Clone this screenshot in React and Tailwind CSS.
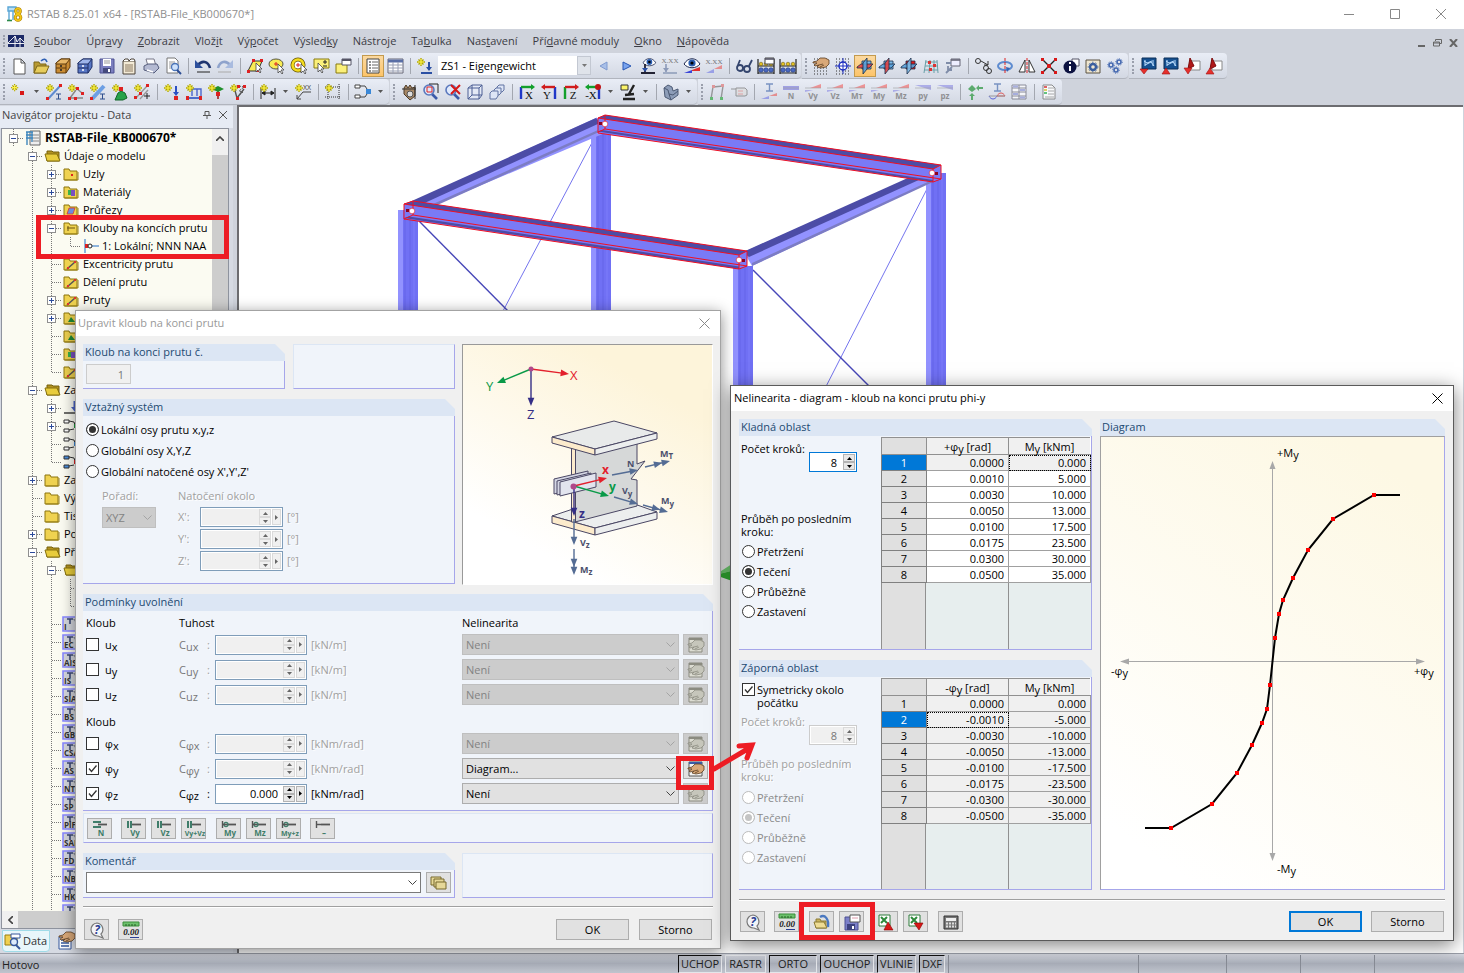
import React from "react";

const MENU = [
  ["", "S", "oubor"],
  ["Úpr", "a", "vy"],
  ["", "Z", "obrazit"],
  ["Vlož", "i", "t"],
  ["Vý", "p", "očet"],
  ["Výsled", "k", "y"],
  ["Nástro", "j", "e"],
  ["Ta", "b", "ulka"],
  ["Nas", "t", "avení"],
  ["Pří", "d", "avné moduly"],
  ["", "O", "kno"],
  ["", "N", "ápověda"],
];

const Star = () => (
  <>
    <path d="M4 0v8M0 4h8M1.5 1.5l5 5M6.5 1.5l-5 5" stroke="#b0a600" strokeWidth="1.4" />
    <path d="M4 1v6M1 4h6" stroke="#fff34a" strokeWidth="1.2" />
  </>
);
const Planes = ({ a, b, c }) => (
  <g stroke="#1c2f4a" strokeWidth=".8">
    <path d="M5 3h9v8H5z" fill={c} />
    <path d="M0 9l4-3h12l-4 4H0z" fill={a} fillOpacity=".9" />
    <path d="M6 5l4-5v11l-4 5z" fill={b} fillOpacity=".9" />
  </g>
);
const Wedge = ({ label, down, flat }) => (
  <g opacity=".75">
    {flat ? (
      <path d="M0 2h16v4H0z" fill="#8a8ae0" />
    ) : down ? (
      <path d="M0 1h16v5z" fill="#9a9ae6" />
    ) : (
      <>
        <path d="M0 6h8L0 8z" fill="#9a9ae6" />
        <path d="M5 4L16 0v4z" fill="#ef7777" />
      </>
    )}
    <path d="M0 4h16" stroke="#888" strokeWidth=".6" />
    <text x="8" y="15" textAnchor="middle" fontSize="8" fontWeight="bold" fill="#777">{label}</text>
  </g>
);
const Axis = ({ label, h, v, flip }) => (
  <g>
    <path d={flip ? "M14 3v12" : "M2 3v12"} stroke={v} strokeWidth="2.4" />
    <path d="M2 3h12" stroke={h} strokeWidth="2.4" />
    <path d={flip ? "M4 0L0 3l4 3z" : "M12 0l4 3-4 3z"} fill={h} />
    <text x={flip ? 6 : 10} y="15" textAnchor="middle" fontSize="11" fontFamily="Liberation Serif" fill="#111">{label}</text>
  </g>
);
const Lens = () => (
  <>
    <path d="M9 10l5 5" stroke="#3c5aa8" strokeWidth="2.6" />
    <circle cx="6" cy="6" r="5" fill="#dfe9fb" stroke="#5a78bd" strokeWidth="1.6" />
  </>
);
const Bridge = ({ sq }) => (
  <>
    <path d="M0 1v15M16 1v15M0 8h16M0 15h16" stroke="#222" strokeWidth="1.2" />
    <g fill="#e2c020" stroke="#5c4a00" strokeWidth=".5">
      <circle cx="3" cy="6" r="1.8" />
      <circle cx="8" cy="6" r="1.8" />
      <circle cx="13" cy="6" r="1.8" />
    </g>
    <g fill="#4a68c0" stroke="#182c66" strokeWidth=".5">
      <circle cx="3" cy="12" r="2.3" />
      <circle cx="8" cy="12" r="2.3" />
      <circle cx="13" cy="12" r="2.3" />
    </g>
    {sq && (
      <>
        <path d="M7 0h9v6H7z" fill="#fff" stroke="#444" />
        <path d="M7 1h9" stroke="#556" strokeWidth="1.6" />
      </>
    )}
  </>
);
const Eye = () => (
  <>
    <path d="M0 6C4-1 12-1 16 6c-4 5-12 5-16 0z" fill="#fff" stroke="#1d2850" />
    <circle cx="8" cy="5" r="3.6" fill="#2a5db0" />
    <circle cx="8" cy="5" r="1.6" fill="#000" />
  </>
);
const HAND = "M0 6l4-1 3-3h5l4 2v4l-3 3-5 1-4-1 2-2-4 1-1-1 3-2H0z";
const Hand = () => (
  <>
    <path d={HAND} fill="#d9a878" stroke="#5b3d22" strokeWidth=".8" />
    <path d="M6 9l4-1M7 11l4-2" stroke="#5b3d22" strokeWidth=".8" />
  </>
);
const Dots = () => (
  <path d="M1 1h15M1 4h15M1 7h15M1 10h15M1 13h15M1 16h15" stroke="#333" strokeDasharray="1 2" />
);
const Cad = ({ up }) => (
  <>
    <path d="M2 0h14v11H2z" fill="#155090" stroke="#0a2e58" />
    <path d="M4 3l3 2 5-2M5 7l6-3 3 4M5 2v6M13 2v6" stroke="#bfe0ff" fill="none" />
    <path d={up ? "M0 16l4-6 4 6z" : "M0 11h8l-4 5z"} fill="#e6302c" stroke="#a31010" strokeWidth=".6" />
  </>
);
const Pdf = ({ up }) => (
  <>
    <path d="M6 3h10v9H6z" fill="#fff" stroke="#888" />
    <path d="M6 0l4 8-6 3z" fill="#b01818" stroke="#7c0c0c" />
    <path d={up ? "M0 16l4-6 4 6z" : "M0 10h8l-4 6z"} fill="#e6302c" stroke="#a31010" strokeWidth=".6" />
  </>
);

const ICONS = {
  new: <path d="M3 1h7l4 4v11H3zM10 1v4h4" fill="#fff" stroke="#555" />,
  open: (
    <>
      <path d="M1 4h5l1 2h6v9H1z" fill="#b89a32" stroke="#7d6718" />
      <path d="M1 15l3-7h12l-3 7z" fill="#e6cc5c" stroke="#7d6718" />
      <path d="M8 3c3-3 5-2 6 1" fill="none" stroke="#2f60b4" strokeWidth="1.6" />
    </>
  ),
  crate: (
    <>
      <path d="M1 5l5-4h9v8l-4 6H1z" fill="#c98c34" stroke="#5f3a0c" />
      <path d="M1 5l5-4h9l-4 5H1z" fill="#e8b766" stroke="#5f3a0c" />
      <path d="M11 6v9M1 10h10" stroke="#5f3a0c" />
      <path d="M5 8h2M5 12h2" stroke="#222" strokeWidth="1.4" />
    </>
  ),
  crateBlue: (
    <>
      <path d="M1 5l5-4h9v8l-4 6H1z" fill="#5877c4" stroke="#1e2f66" />
      <path d="M1 5l5-4h9l-4 5H1z" fill="#9db4ea" stroke="#1e2f66" />
      <path d="M11 6v9M1 10h10" stroke="#1e2f66" />
      <path d="M5 8h2M5 12h2" stroke="#fff" strokeWidth="1.4" />
    </>
  ),
  save: (
    <>
      <path d="M1 1h14v14H1z" fill="#7b7fbf" stroke="#4d5192" />
      <path d="M4 1h8v7H4z" fill="#fff" />
      <path d="M5 3h6M5 5h6" stroke="#999" />
      <path d="M4 10h8v5H4z" fill="#444a7e" />
      <path d="M9 11h2v3H9z" fill="#fff" />
    </>
  ),
  notes: (
    <>
      <path d="M2 3h12v13H2z" fill="#f3ead6" stroke="#4b4238" />
      <path d="M2 3l2-2h3l1 2 2-2h3l1 2" fill="#fff" stroke="#4b4238" />
      <path d="M4 7h8M4 9h8M4 11h8M4 13h8" stroke="#8c7b62" />
    </>
  ),
  print: (
    <>
      <path d="M3 1h8l2 7H5z" fill="#fff" stroke="#778" />
      <path d="M1 8l4-2h9l2 4-5 5-10-3z" fill="#b4bad2" stroke="#555d7c" />
      <path d="M4 12l6 2" stroke="#fff" strokeWidth="1.5" />
    </>
  ),
  preview: (
    <>
      <path d="M2 0h8l3 3v12H2z" fill="#fff" stroke="#777" />
      <path d="M4 4h6M4 6h6M4 8h3M4 10h2" stroke="#999" />
      <circle cx="10" cy="9" r="3.5" fill="#cfe2fb" stroke="#4a74b8" strokeWidth="1.3" />
      <path d="M12 12l4 4" stroke="#2c4d94" strokeWidth="2" />
    </>
  ),
  undo: (
    <>
      <path d="M3 7c4-5 10-4 12 3" fill="none" stroke="#1f3570" strokeWidth="2.6" />
      <path d="M0 2v8h8z" fill="#2c4f9c" />
      <path d="M2 14h13" stroke="#222" />
    </>
  ),
  redo: (
    <>
      <path d="M13 7C9 2 3 3 1 10" fill="none" stroke="#8fa3cc" strokeWidth="2.6" />
      <path d="M16 2v8H8z" fill="#a9bbdf" />
      <path d="M1 14h13" stroke="#aaa" />
    </>
  ),
  selPoly: (
    <>
      <path d="M1 13L6 3h9l-4 10z" fill="#f8ec54" stroke="#333" />
      <path d="M0 12h3v3H0zM5 1h3v3H5zM13 1h3v3h-3zM10 11h3v3h-3z" fill="#d22" />
      <path d="M9 5v9l2-2 2 3 1-1-2-3h3z" stroke="#444" strokeWidth=".8" fill="#fff" />
    </>
  ),
  selEllipse: (
    <>
      <ellipse cx="7" cy="6" rx="7" ry="5" fill="#f8ec54" stroke="#554" />
      <path d="M7 4v4M5 6h4" stroke="#d22" />
      <path d="M9 6v9l2-2 2 3 1-1-2-3h3z" stroke="#444" strokeWidth=".8" fill="#fff" />
    </>
  ),
  selRing: (
    <>
      <circle cx="7" cy="7" r="5.5" fill="#fff" stroke="#665500" strokeWidth="4" />
      <circle cx="7" cy="7" r="5.5" fill="none" stroke="#f4dc1e" strokeWidth="2.6" />
      <path d="M7 5v4M5 7h4" stroke="#d22" />
      <path d="M10 6v9l2-2 2 3 1-1-2-3h3z" stroke="#444" strokeWidth=".8" fill="#fff" />
    </>
  ),
  selRect: (
    <>
      <path d="M1 1h15v9H1z" fill="#fbf07a" stroke="#887a10" />
      <path d="M5 5v9l2-2 2 3 1-1-2-3h3z" stroke="#444" strokeWidth=".8" fill="#fff" />
      <path d="M12 2v4M10 4h4M10 8h4" stroke="#222" />
    </>
  ),
  selWin: (
    <>
      <path d="M1 6h11v9H1z" fill="#fbf07a" stroke="#887a10" />
      <path d="M7 1h9v6H7z" fill="#fff" stroke="#556" />
      <path d="M7 2h9" stroke="#556" strokeWidth="2" />
    </>
  ),
  list: (
    <>
      <path d="M2 1h12v14H2z" fill="#fff" stroke="#444" />
      <path d="M4 4h2M4 7h2M4 10h2M4 13h2" stroke="#222" />
      <path d="M7 4h6M7 7h6M7 10h6M7 13h6" stroke="#666" />
    </>
  ),
  table: (
    <>
      <path d="M1 1h15v14H1z" fill="#fff" stroke="#667" />
      <path d="M1 3h15" stroke="#5a6fa6" strokeWidth="3" />
      <path d="M1 7h15M1 10h15M1 13h15M6 4v11M11 4v11" stroke="#9aa0b4" />
    </>
  ),
  loadStar: (
    <>
      <Star />
      <path d="M12 4v8M4 15h11" stroke="#2b50a4" strokeWidth="2" />
      <path d="M9 9l3 4 3-4z" fill="#2b50a4" />
    </>
  ),
  prev: <path d="M11 4v8L4 8z" fill="#a8bfe8" stroke="#7f9ad0" />,
  next: <path d="M5 4v8l8-4z" fill="#7aa4ee" stroke="#2756b4" />,
  eyeLoad: (
    <>
      <g transform="translate(3 0) scale(.8)"><Eye /></g>
      <path d="M5 6v8M1 15h14" stroke="#223" strokeWidth="1.8" />
      <path d="M2 10l3 4 3-4z" fill="#2b50a4" />
    </>
  ),
  xxLoad: (
    <g fill="#777">
      <text x="8" y="5" textAnchor="middle" fontSize="7" fontFamily="Liberation Serif">X.XX</text>
      <path d="M4 6v8M1 15h14" stroke="#8c9ab8" strokeWidth="1.6" />
      <path d="M1 10l3 4 3-4z" fill="#8c9ab8" />
    </g>
  ),
  eyeRes: (
    <>
      <Eye />
      <path d="M0 15l8-3v3z" fill="#3a46d8" />
      <path d="M8 12l8-3v4H8z" fill="#e03030" />
    </>
  ),
  xxRes: (
    <g opacity=".8">
      <text x="8" y="6" textAnchor="middle" fontSize="7" fontFamily="Liberation Serif" fill="#555">X.XX</text>
      <path d="M0 15l8-4v4z" fill="#8a90e6" />
      <path d="M8 11l8-4v4H8z" fill="#e67a7a" />
    </g>
  ),
  glasses: (
    <g fill="none" stroke="#34456e" strokeWidth="1.8">
      <circle cx="4" cy="10" r="3" />
      <circle cx="11" cy="11" r="3" />
      <path d="M2 7L4 2M13 8l3-6M7 10h1" />
    </g>
  ),
  abacusWin: <Bridge sq />,
  abacus: <Bridge />,
  gridHand: (
    <>
      <Dots />
      <g transform="translate(0 -2)"><Hand /></g>
    </>
  ),
  gridSnap: (
    <>
      <Dots />
      <circle cx="8" cy="8" r="4" fill="#fff" stroke="#1a2cc0" strokeWidth="1.4" />
      <path d="M8 0v16M0 8h16" stroke="#1a2cc0" />
    </>
  ),
  planeA: <Planes a="#e34343" b="#5aa2dc" c="#7dbbe8" />,
  planeB: <Planes a="#5aa2dc" b="#e34343" c="#7dbbe8" />,
  planeC: <Planes a="#5aa2dc" b="#7dbbe8" c="#e01818" />,
  gridRed: (
    <>
      <path d="M3 2L1 15M7 2L6 15M11 2v13M14 2l1 13M2 4h12M2 8h13M1 12h14" stroke="#6aa0a8" />
      <path d="M5 3h3v3H5zM10 6h3v3h-3zM6 10h3v3H6z" fill="#d33" />
    </>
  ),
  tool: (
    <>
      <path d="M6 1h9v7H6z" fill="#eef" stroke="#667" />
      <path d="M6 2h9" stroke="#667" strokeWidth="1.6" />
      <path d="M1 15l6-6M3 8v4h4M1 5h5" stroke="#7f8ca8" strokeWidth="1.8" fill="none" />
    </>
  ),
  move: (
    <g fill="none" stroke="#333">
      <circle cx="3" cy="3" r="2.5" />
      <circle cx="11" cy="10" r="2.5" />
      <circle cx="14" cy="13" r="2.5" />
      <path d="M6 3l7 4M13 3v4H9" />
    </g>
  ),
  rotate: (
    <>
      <ellipse cx="8" cy="8" rx="7" ry="4" fill="none" stroke="#5d8bd0" strokeWidth="2" />
      <path d="M8 0v16" stroke="#d22" strokeDasharray="3 1" />
      <path d="M9 9l4 1-3 4z" fill="#3564b4" />
    </>
  ),
  mirror: (
    <>
      <path d="M6 2v12H0zM10 2v12h6z" fill="#fff" stroke="#333" />
      <path d="M8 0v16" stroke="#d22" strokeDasharray="3 1" />
    </>
  ),
  explode: (
    <>
      <path d="M2 2l12 12M14 2L2 14" stroke="#222" strokeWidth="1.4" />
      <path d="M0 0h3v3H0zM13 0h3v3h-3zM0 13h3v3H0zM13 13h3v3h-3zM6 6h4v4H6z" fill="#d81818" />
    </>
  ),
  info: (
    <>
      <path d="M9 1h7v7H9z" fill="#fff" stroke="#556" />
      <circle cx="7" cy="9" r="6.5" fill="#0c1240" />
      <path d="M7 8v5M7 4v2" stroke="#fff" strokeWidth="2" />
    </>
  ),
  settings: (
    <>
      <path d="M1 2h14v13H1z" fill="#efe6d0" stroke="#5b5243" />
      <circle cx="8" cy="9" r="3" fill="none" stroke="#3c5f9e" strokeWidth="2.4" />
      <circle cx="8" cy="9" r="4.8" fill="none" stroke="#3c5f9e" strokeDasharray="1.5 2" />
    </>
  ),
  gears: (
    <g fill="none" stroke="#4468b0" strokeWidth="1.6">
      <circle cx="4" cy="7" r="2" />
      <circle cx="12" cy="4" r="2" />
      <circle cx="9" cy="12" r="2" />
      <circle cx="4" cy="7" r="3.3" strokeWidth="1" strokeDasharray="1 1.5" />
      <circle cx="12" cy="4" r="3.3" strokeWidth="1" strokeDasharray="1 1.5" />
      <circle cx="9" cy="12" r="3.3" strokeWidth="1" strokeDasharray="1 1.5" />
    </g>
  ),
  cadDown: <Cad />,
  cadUp: <Cad up />,
  pdfDown: <Pdf />,
  pdfUp: <Pdf up />,
  node: (
    <>
      <g transform="scale(.9)"><Star /></g>
      <path d="M9 7h4v4H9z" fill="#d81818" />
    </>
  ),
  member: (
    <>
      <path d="M2 15L14 2" stroke="#5d8bd0" strokeWidth="2" />
      <Star />
      <path d="M0 13h3v3H0zM13 0h3v3h-3z" fill="#d22" />
      <path d="M10 10h5M10 15h5M12.500 10v5" stroke="#2f4f8e" />
    </>
  ),
  frame: (
    <>
      <path d="M1 14h14M8 4l6 5M2 14l6-8" stroke="#888" fill="none" strokeWidth="1.4" />
      <Star />
      <path d="M0 13h3v3H0zM6 13h3v3H6zM8 3h3v3H8zM13 8h3v3h-3z" fill="#d22" />
    </>
  ),
  memberI: (
    <>
      <path d="M2 15L14 2" stroke="#6d9fe4" strokeWidth="4" />
      <Star />
      <path d="M0 13h3v3H0z" fill="#d22" />
      <path d="M10 10h5M10 15h5M12.500 10v5" stroke="#2f4f8e" />
    </>
  ),
  support: (
    <>
      <path d="M6 9l3-2 4 2 2 5-4 2H3z" fill="#27a24a" stroke="#136428" />
      <Star />
      <path d="M7 3h4v4H7z" fill="#d22" />
    </>
  ),
  memberPlus: (
    <>
      <path d="M2 14L13 2M6 15l8-9" stroke="#999" strokeWidth="1.4" />
      <Star />
      <path d="M0 12h3v3H0zM12 0h3v3h-3zM5 8h3v3H5z" fill="#d22" />
      <path d="M13 9v6M10 12h6" stroke="#222" />
    </>
  ),
  load1: (
    <>
      <Star />
      <path d="M12 2v8" stroke="#2b50c4" strokeWidth="2" />
      <path d="M9 8l3 4 3-4z" fill="#2b50c4" />
      <path d="M10 12h4v4h-4z" fill="#d22" />
    </>
  ),
  load2: (
    <>
      <path d="M2 5h13v8M6 5v7M11 5v7" stroke="#4a66cc" strokeWidth="1.4" fill="none" />
      <Star />
      <path d="M1 14h14" stroke="#2b50c4" strokeWidth="1.6" />
      <path d="M0 12h3v4H0zM13 12h3v4h-3z" fill="#d22" />
    </>
  ),
  load3: (
    <>
      <path d="M10 4v11" stroke="#a02020" strokeWidth="1.6" />
      <path d="M4 5l6-3 6 3-6 3z" fill="#20902c" />
      <Star />
      <path d="M8 8h4v4H8z" fill="#d22" />
    </>
  ),
  load4: (
    <>
      <path d="M4 3l3 11L14 5" fill="none" stroke="#555" strokeWidth="1.4" />
      <path d="M9 2l5 1-5 4 4 1-4 3" fill="none" stroke="#555" strokeDasharray="2 1" />
      <Star />
      <path d="M7 1h3v3H7zM13 1h3v3h-3zM6 13h3v3H6z" fill="#d22" />
    </>
  ),
  dim: (
    <>
      <path d="M1 4v11M15 4v11M2 9h12M2 9l3-2v4zM14 9l-3-2v4z" stroke="#222" fill="#222" />
      <Star />
    </>
  ),
  textXx: (
    <>
      <Star />
      <text x="12" y="6" textAnchor="middle" fontSize="7" fill="#444">XX</text>
      <path d="M2 15L8 8h8M2 15v-4M2 15h4" stroke="#444" fill="none" />
    </>
  ),
  gridStar: (
    <>
      <path d="M3 0v16M14 0v16M0 3h16M0 13h16" stroke="#333" strokeDasharray="1 1" />
      <Star />
    </>
  ),
  combine: (
    <>
      <path d="M0 1h5v3H0zM0 11h5v3H0z" fill="#fff" stroke="#444" />
      <path d="M5 2h5l2 3M5 13h5l2-3" stroke="#444" fill="none" />
      <path d="M11 5h5v5h-5z" fill="#3a88d8" />
    </>
  ),
  pan: (
    <>
      <path d="M3 4l2-3 2 3 2-3 2 3 3-1v9l-5 4-6-6z" fill="#a88866" stroke="#4c3a28" />
      <circle cx="9" cy="10" r="3" fill="#ddd" stroke="#555" />
      <path d="M1 5h14M14 1v14" stroke="#333" />
    </>
  ),
  zoomWin: (
    <>
      <Lens />
      <path d="M6 0h9v9" fill="none" stroke="#222" />
      <path d="M4 3h5v5H4z" stroke="#d22" fill="none" />
    </>
  ),
  zoomX: (
    <>
      <Lens />
      <path d="M6 1l9 9M15 1l-9 9" stroke="#d81818" strokeWidth="2" />
    </>
  ),
  cube: <path d="M1 4l4-3h10v10l-3 4H1zM1 4h11v11M12 4l3-3M5 1v10L1 15M5 11h10" fill="#e8eefc" fillOpacity=".6" stroke="#4c5f94" />,
  cubes: (
    <g fill="#dde5f6" stroke="#6072a2">
      <path d="M8 3l2-2h5v5l-2 2H8z" />
      <path d="M5 6l2-2h5v5l-2 2H5z" />
      <path d="M1 9l2-2h6v5l-2 3H1z" />
    </g>
  ),
  axX: <Axis label="X" h="#12a02c" v="#2038c8" />,
  axY: <Axis label="Y" h="#d01c1c" v="#2038c8" flip />,
  axZ: <Axis label="Z" h="#d01c1c" v="#12a02c" />,
  axMX: (
    <>
      <Axis label="-X" h="#12a02c" v="#2038c8" flip />
      <circle cx="13" cy="3" r="3" fill="#c01414" />
    </>
  ),
  micro: (
    <>
      <path d="M14 1l-5 9M5 11l9-1M3 15h12" stroke="#222" strokeWidth="2.4" />
      <path d="M1 1h7v5H1z" fill="#fbf46a" stroke="#333" />
    </>
  ),
  shape: (
    <>
      <path d="M1 4l4-3 4 2 1 4 5-2v6l-7 5-6-3z" fill="#8d9db8" stroke="#4c5a74" />
      <path d="M1 4l4 2 1 4 4 1 5-4M6 10l2 6" stroke="#4c5a74" />
    </>
  ),
  frameGray: (
    <g opacity=".7">
      <path d="M2 15L4 3l10-1-2 13" fill="none" stroke="#777" strokeWidth="1.4" />
      <path d="M1 13h3v3H1zM11 13h3v3h-3z" fill="#3a4" />
      <path d="M3 1h3v3H3zM12 0h3v3h-3z" fill="#d77" />
    </g>
  ),
  tag: (
    <g opacity=".7">
      <path d="M0 5h5M5 4h9l2 2v5l-2 1H5z" fill="#ddd" stroke="#777" />
      <path d="M7 7h5M7 10h5" stroke="#d88" />
    </g>
  ),
  iDiag: (
    <g opacity=".8">
      <path d="M5 0h7M5 7h7M8.500 0v7" stroke="#5f7fb8" strokeWidth="1.4" />
      <path d="M0 15l8-3v3z" fill="#8a90e6" />
      <path d="M8 12l8-3v3z" fill="#e67a7a" />
    </g>
  ),
  resN: <Wedge label="N" flat />,
  resVy: <Wedge label="Vy" />,
  resVz: <Wedge label="Vz" />,
  resMt: <Wedge label="Mт" />,
  resMy: <Wedge label="My" />,
  resMz: <Wedge label="Mz" />,
  resPy: <Wedge label="py" down />,
  resPz: <Wedge label="pz" down />,
  reaction: (
    <g fill="#5cab6e">
      <path d="M1 5l4-4 4 4-4 3zM2 12h6l-3-3zM4 12h2v4H4zM9 4l3-3v6zM12 3h4v2h-4z" />
    </g>
  ),
  iSine: (
    <g fill="none" opacity=".8">
      <path d="M5 0h7M5 7h7M8.500 0v7" stroke="#5f7fb8" strokeWidth="1.4" />
      <path d="M0 12c2 4 6 4 8 0" stroke="#3a46d8" />
      <path d="M8 12c2-4 6-4 8 0z" stroke="#d33" />
      <path d="M0 12h16" stroke="#888" />
    </g>
  ),
  quads: (
    <g opacity=".7">
      <path d="M1 1h14v14H1zM8 1v14M1 4h14M1 8h14M1 12h14" fill="#fff" stroke="#667" />
      <path d="M2 2.500h5M9 6h5M2 10h5M9 13.500h5" stroke="#9098d8" strokeWidth="2" />
    </g>
  ),
  report: (
    <g opacity=".8">
      <path d="M2 1h9l3 3v11H2z" fill="#fff" stroke="#777" />
      <path d="M3 3h3" stroke="#d44" strokeWidth="2" />
      <path d="M3 6h3" stroke="#dc4" strokeWidth="2" />
      <path d="M3 9h3" stroke="#4b6" strokeWidth="2" />
      <path d="M7 4h6M7 7h6M7 10h6M4 13h9" stroke="#999" />
    </g>
  ),
  // dialog buttons
  help: (
    <>
      <path d="M8 1a6.500 6.500 0 1 0 1 13l5 2-2-4A6.500 6.500 0 0 0 8 1z" fill="#f2f4f8" stroke="#777" strokeWidth="1.2" />
      <text x="8" y="12" textAnchor="middle" fontSize="12" fontStyle="italic" fontWeight="bold" fill="#2a3f94">?</text>
    </>
  ),
  units: (
    <>
      <path d="M0 0h16v4H0z" fill="#6cc06c" stroke="#3b8f3b" />
      <path d="M3 2v2M6 2v2M9 2v2M12 2v2" stroke="#245f24" />
      <text x="8" y="13" textAnchor="middle" fontSize="9" fontFamily="Liberation Serif" fontStyle="italic" fontWeight="bold" fill="#222">0.00</text>
      <path d="M7 15.500h9" stroke="#2a3f94" />
    </>
  ),
  excelUp: (
    <>
      <path d="M1 1h11v11H1z" fill="#fff" stroke="#2c7a3a" />
      <path d="M3 3l6 6M9 3L3 9" stroke="#2c8a3a" strokeWidth="2" />
      <path d="M6 16l4-8 5 8z" fill="#d81818" stroke="#800" strokeWidth=".6" />
    </>
  ),
  excelDown: (
    <>
      <path d="M1 1h11v11H1z" fill="#fff" stroke="#2c7a3a" />
      <path d="M3 3l6 6M9 3L3 9" stroke="#2c8a3a" strokeWidth="2" />
      <path d="M6 9h9l-4 7z" fill="#d81818" stroke="#800" strokeWidth=".6" />
    </>
  ),
  calc: (
    <>
      <path d="M1 2h14v13H1z" fill="#777" stroke="#333" />
      <path d="M3 4h10v3H3z" fill="#eee" />
      <path d="M3 9.500h10M3 12.500h10" stroke="#ddd" strokeWidth="2" strokeDasharray="2 1" />
    </>
  ),
  folderArc: (
    <>
      <path d="M6 3c5-3 9 2 8 10" fill="none" stroke="#4a78c0" strokeWidth="2.4" />
      <path d="M2 5h4l1 2h5v7H2z" fill="#c9b35c" stroke="#8a7a34" />
      <path d="M2 14L0 8h10l3 6z" fill="#eedc94" stroke="#8a7a34" />
    </>
  ),
  saveWin: (
    <>
      <path d="M1 3h13v13H1z" fill="#7b7fc8" stroke="#4d5192" />
      <path d="M3 10h8v6H3z" fill="#3d427e" />
      <path d="M8 12h2v3H8z" fill="#fff" />
      <path d="M6 1h10v7H6z" fill="#fff" stroke="#555" />
      <path d="M8 4h6" stroke="#d9a" />
    </>
  ),
  edit: (
    <>
      <path d="M1 1h13v14H1z" fill="#f4f4f4" stroke="#555" />
      <path d="M1 2h13" stroke="#3a5ca8" strokeWidth="2" />
      <g transform="translate(0 1)"><Hand /></g>
    </>
  ),
  editOff: (
    <g stroke="#8b8b80">
      <path d="M1 1h13v14H1z" fill="#dcdcd2" />
      <path d="M1 2h13" strokeWidth="2" />
      <path d={HAND} fill="#c6c6bb" strokeWidth=".8" transform="translate(0 1)" />
      <path d="M6 10l4-1M7 12l4-2" strokeWidth=".8" />
    </g>
  ),
  cards: (
    <g fill="#e6d898" stroke="#77682c">
      <path d="M0 2h10v8H0z" />
      <path d="M3 4h10v8H3z" />
      <path d="M5 7h10v7H5z" />
    </g>
  ),
  dataTab: (
    <>
      <path d="M0 2h12v10H0z" fill="#f0d050" stroke="#9a7c10" />
      <path d="M6 1h9v4H6z" fill="#fff" stroke="#34579c" />
      <circle cx="9" cy="9" r="3.5" fill="#dcebfc" stroke="#34579c" strokeWidth="1.4" />
      <path d="M11 12l4 4" stroke="#34579c" strokeWidth="2" />
    </>
  ),
  viewTab: (
    <>
      <path d="M1 4h12v12H1z" fill="#fff" stroke="#34579c" />
      <path d="M3 7h8M3 10h8M3 13h8" stroke="#34579c" strokeWidth="1.4" />
      <g transform="translate(1 -3)"><Hand /></g>
    </>
  ),
};

const Icon = ({ name }) => (
  <svg className="w-4 h-4 shrink-0 overflow-visible" viewBox="0 0 16 16" fill="none" aria-hidden="true">
    {ICONS[name]}
  </svg>
);

const ROW1 = [
  ["new", "open", "crate", "crateBlue", "save", "notes", "print", "preview", "|", "undo", "redo", "|", "selPoly", "selEllipse", "selRing", "selRect", "selWin", "|", "*list", "table", "|", "loadStar", "combo", "prev", "next", "eyeLoad", "xxLoad", "eyeRes", "xxRes", "|", "glasses", "abacusWin", "abacus"],
  ["gridHand", "gridSnap", "*planeA", "planeB", "planeC", "gridRed", "tool", "|", "move", "rotate", "mirror", "explode", "info", "settings", "gears"],
  ["cadDown", "cadUp", "pdfDown", "pdfUp"],
];
const ROW2 = [
  ["node", "v", "member", "frame", "memberI", "support", "memberPlus", "|", "load1", "load2", "load3", "load4", "|", "dim", "v", "textXx", "|", "gridStar", "|", "combine", "v"],
  ["pan", "zoomWin", "zoomX", "cube", "cubes", "|", "axX", "axY", "axZ", "axMX", "v", "micro", "v", "|", "shape", "v"],
  ["frameGray", "tag", "|", "iDiag", "resN", "resVy", "resVz", "resMt", "resMy", "resMz", "resPy", "resPz", "|", "reaction", "iSine", "quads", "|", "report"],
];

function ToolItem({ id }) {
  if (id === "|") return <span className="w-2 flex justify-center"><span className="w-px h-4 bg-[#a3a7b0]" /></span>;
  if (id === "v")
    return (
      <button aria-label="Další" className="w-[13px] h-[22px] flex items-center justify-center">
        <svg className="w-[5px] h-[3px]" viewBox="0 0 5 3"><path d="M0 0h5L2.500 3z" fill="#555" /></svg>
      </button>
    );
  if (id === "combo")
    return (
      <span className="relative mx-[2px] w-[153px]">
        <select aria-label="Zatěžovací stav" className="appearance-none block w-full h-[19px] bg-white pl-[3px] text-[11px] text-black">
          <option>ZS1 - Eigengewicht</option>
        </select>
        <span className="absolute right-0 top-0 h-[19px] w-[14px] bg-[#dfe3ea] border border-[#c3c8d2] flex items-center justify-center pointer-events-none">
          <svg className="w-[5px] h-[3px]" viewBox="0 0 5 3"><path d="M0 0h5L2.500 3z" fill="#777" /></svg>
        </span>
      </span>
    );
  const on = id[0] === "*";
  const name = on ? id.slice(1) : id;
  return (
    <button
      aria-label={name}
      className={
        "w-[22px] h-[22px] flex items-center justify-center " +
        (on ? "border border-[#c39a4e] bg-linear-to-b from-[#fbd9a0] to-[#fdc468]" : "")
      }
    >
      <Icon name={name} />
    </button>
  );
}

function Toolbar({ groups }) {
  return (
    <div className="flex h-[26px] gap-px bg-[#cfd3dc]">
      {groups.map((g, i) => (
        <div key={i} className="flex items-center pr-[2px] rounded-r bg-linear-to-b from-[#e9edf6] to-[#d3d8e3] border-b border-[#b1b5be]">
          <span className="w-2 flex justify-center">
            <span className="h-4 border-l-2 border-dotted border-[#9a9fac]" />
          </span>
          {g.map((id, k) => <ToolItem key={k} id={id} />)}
        </div>
      ))}
    </div>
  );
}

/* ---------- navigator tree ---------- */

// [level, sign, icon, label, guides] - "v" line, " " gap, then the elbow of the row itself
const TREE = [
  [0, "-", "root", "RSTAB-File_KB000670*", ""],
  [1, "-", "folderOpen", "Údaje o modelu", " "],
  [2, "+", "node", "Uzly", " v"],
  [2, "+", "mat", "Materiály", " v"],
  [2, "+", "sect", "Průřezy", " v"],
  [2, "-", "hinge", "Klouby na koncích prutu", " v"],
  [3, "L", "hingeItem", "1: Lokální; NNN NAA", " vv"],
  [2, "T", "line", "Excentricity prutu", " v"],
  [2, "T", "line", "Dělení prutu", " v"],
  [2, "+", "line", "Pruty", " v"],
  [2, "+", "sup", "", " v"],
  [2, "T", "sup", "", " v"],
  [2, "T", "mat", "", " v"],
  [2, "L", "line", "", " v"],
  [1, "-", "folderOpen", "Za", " "],
  [2, "+", "load", "", " v"],
  [2, "+", "comboG", "", " v"],
  [2, "T", "comboB", "", " v"],
  [2, "L", "comboR", "", " v"],
  [1, "+", "folder", "Za", " "],
  [1, "T", "folder", "Vý", " "],
  [1, "T", "folder", "Tis", " "],
  [1, "+", "folder", "Po", " "],
  [1, "-", "folderOpen", "Př", " "],
  [2, "-", "folderOpen", "", " v"],
  [3, "T", "", "", " vv"],
  [3, "L", "", "", " vv"],
  ...["I", "EC", "AISC", "IS", "SIA", "BS", "GB", "CSA", "AS", "NTC", "SP", "PlFM", "SANS", "FD", "NBR", "HK", ""].map(
    (m) => [2, "T", "mod:" + m, "", " v"]
  ),
];

const DECOR = {
  node: <path d="M8 8h2v2H8z" fill="#d22" />,
  mat: (
    <>
      <path d="M5 6h3v5H5z" fill="#3ab04a" />
      <path d="M8 6h4v6H8z" fill="#7a50c0" />
    </>
  ),
  sect: <path d="M4 12l2-6h6l-2 6z" fill="#6a8ee0" stroke="#d33" strokeWidth=".8" />,
  hinge: <path d="M4 8h8M5 6v5" stroke="#6b5210" />,
  line: (
    <>
      <path d="M4 13l8-7" stroke="#555" strokeWidth="1.6" />
      <path d="M4 11h2v2H4zM11 5h2v2h-2z" fill="#d33" />
    </>
  ),
  sup: <path d="M5 12l3-5 4 5z" fill="#1d8a36" />,
};

function TreeIcon({ kind }) {
  let art;
  if (kind === "root")
    art = (
      <>
        <path d="M5 1h10v14H5z" fill="#eee" stroke="#666" />
        <path d="M8 5h6M8 8h6M8 11h6" stroke="#888" />
        <path d="M1 2h7M1 5h7M1 8h7M2 2v13M7 2v10" stroke="#3f87bd" strokeWidth="1.4" />
      </>
    );
  else if (kind === "folderOpen")
    art = (
      <>
        <path d="M3 3h5l1 1h6v9H3z" fill="#b39220" stroke="#75600c" />
        <path d="M3 13L1 6h12l3 7z" fill="#e8cc3c" stroke="#85700c" />
      </>
    );
  else if (kind === "hingeItem")
    art = (
      <>
        <path d="M3 1v14" stroke="#8db4dc" strokeWidth="2" />
        <path d="M9 8h8" stroke="#8db4dc" strokeWidth="2" />
        <path d="M3 6h3v4H3z" fill="#d22" />
        <circle cx="8" cy="8" r="2" fill="#fff" stroke="#222" />
      </>
    );
  else if (kind === "load")
    art = (
      <>
        <path d="M12 1v7" stroke="#4a62c4" strokeWidth="3" />
        <path d="M8 7h8l-4 5z" fill="#4a62c4" />
        <path d="M1 13h15" stroke="#333" strokeWidth="1.400" />
      </>
    );
  else if (kind.startsWith("combo"))
    art = (
      <>
        <path d="M1 2h5v3H1zM1 11h5v3H1z" fill={kind === "comboR" ? "#4a90e0" : "#fff"} stroke="#333" />
        <path d="M6 3l5 1 1 3M6 12l5-1" stroke="#333" />
        <path d="M11 6h4v4h-4z" fill={kind === "comboG" ? "#1b9a3a" : kind === "comboB" ? "#3a88d8" : "#d22"} />
      </>
    );
  else if (kind.startsWith("mod:"))
    art = (
      <>
        <path d="M0 1h16v14H0z" fill="#d4d6dc" stroke="#8888ff" strokeWidth="1.6" />
        <path d="M4 3h6M7 3v5" stroke="#3c4a78" strokeWidth="1.6" />
        <path d="M10 3h6v8z" fill="#8d9099" />
        <text x="1" y="14" fontSize="8" fontWeight="bold" fill="#333">{kind.slice(4)}</text>
      </>
    );
  else
    art = (
      <>
        <path d="M1 3h5l1 2h7v9H1z" fill="#efd250" stroke="#8c740e" />
        <path d="M2 14h13V6" stroke="#9c8418" />
        {DECOR[kind]}
      </>
    );
  return (
    <svg className="w-4 h-4 overflow-visible" viewBox="0 0 16 16" fill="none">
      {kind && art}
    </svg>
  );
}

function Guide({ kind }) {
  const d = { v: "M9.500 0v18", T: "M9.500 0v18M10 9.500h9", L: "M9.500 0v9M10 9.500h9" }[kind] || "M9.500 0v18M14 9.500h5";
  return (
    <svg className="w-[19px] h-[18px] shrink-0" viewBox="0 0 19 18" fill="none">
      {kind !== " " && <path d={d} stroke="#777" strokeDasharray="1 1" />}
      {(kind === "+" || kind === "-") && (
        <>
          <rect x="5.500" y="5.500" width="8" height="8" fill="#fff" stroke="#8f8f8f" />
          <path d={kind === "+" ? "M7 9.500h5M9.500 7v5" : "M7 9.500h5"} stroke="#2b4a9a" />
        </>
      )}
    </svg>
  );
}

function Navigator() {
  return (
    <aside className="w-[233px] shrink-0 flex flex-col bg-[#d6dae3]">
      <header className="h-[22px] mt-px pb-1 bg-[#e6ebf4] flex items-center pl-[2px] pr-[6px] text-[#444]">
        <span className="flex-1">Navigátor projektu - Data</span>
        <button aria-label="Připnout" className="mr-2">
          <svg className="w-2 h-2" viewBox="0 0 8 8" fill="none" stroke="#555"><path d="M2 .5h4v4H2zM0 4.500h8M4 5v3" /></svg>
        </button>
        <button aria-label="Zavřít panel">
          <svg className="w-2 h-2" viewBox="0 0 8 8" stroke="#555"><path d="M0 0l8 8M8 0L0 8" /></svg>
        </button>
      </header>
      <div className="flex-1 min-h-0 ml-px mr-1 flex flex-col border border-[#8e939e] bg-[#fbfbf2]">
        <div className="flex-1 min-h-0 flex">
          <ul className="flex-1 min-w-0 overflow-hidden pl-[2px]">
            {TREE.map(([level, sign, icon, label, guides], i) => (
              <li key={i} className="h-[18px] flex items-center whitespace-nowrap text-black">
                {guides.split("").map((g, k) => <Guide key={k} kind={g} />)}
                <Guide kind={sign} />
                <span className="w-[19px] shrink-0 flex justify-center"><TreeIcon kind={icon} /></span>
                <span className={level === 0 ? "ml-[3px] font-bold text-[12px]" : "ml-[3px]"}>{label}</span>
              </li>
            ))}
          </ul>
          <div className="w-4 bg-[#f0f0f0] flex flex-col">
            <div className="h-[26px] pt-[7px] flex justify-center">
              <svg className="w-2 h-[5px]" viewBox="0 0 8 5" fill="none" stroke="#444" strokeWidth="1.6"><path d="M0 5l4-4 4 4" /></svg>
            </div>
            <div className="flex-1 bg-[#cdcdcd]" />
          </div>
        </div>
        <div className="h-[17px] bg-[#f0f0f0] flex">
          <div className="w-4 flex items-center justify-center">
            <svg className="w-[5px] h-2" viewBox="0 0 5 8" fill="none" stroke="#444" strokeWidth="1.6"><path d="M5 0L1 4l4 4" /></svg>
          </div>
          <div className="w-[150px] bg-[#cdcdcd]" />
        </div>
      </div>
      <div className="h-6 flex items-center gap-2 pl-[2px] text-[#333]">
        <button className="h-[22px] px-[2px] flex items-center gap-[2px] bg-[#e8f6fa] border border-[#9fdbe8] rounded-b">
          <Icon name="dataTab" />Data
        </button>
        <button aria-label="Zobrazit"><Icon name="viewTab" /></button>
      </div>
    </aside>
  );
}

/* ---------- 3D view ---------- */

const Column = ({ x, y }) => (
  <>
    <rect x={x} y={y} width="20" height={600 - y} fill="#7070f4" />
    <rect x={x} y={y} width="5" height={600 - y} fill="#9292ff" />
    <path d={`M${x + 7} ${y}V600M${x + 12} ${y}V600`} stroke="#6464e8" />
    <path d={`M${x + 16} ${y}V600`} stroke="#7c7cfa" />
  </>
);

const Hinge = ({ x, y, left }) => (
  <>
    <path d={left ? `M${x - 6} ${y - 2}h3v3h-3z` : `M${x + 3} ${y - 1}h3v3h-3z`} fill="#8b0020" />
    <circle cx={x} cy={y} r="2.800" fill="#fff" stroke="#e01020" strokeWidth=".6" />
  </>
);

function Model() {
  return (
    <svg className="w-full h-full" viewBox="240 107 1224 846" preserveAspectRatio="xMinYMin slice" fill="none">
      <path d="M929 187L816 408" stroke="#7474ee" />
      <path d="M596 137L504 311" stroke="#7474ee" />
      <Column x={592} y={124} />
      <path d="M406 205L598 117.500L606 133L414 214z" fill="#9292ff" />
      <path d="M406 204L597 118l4 5L419 206z" fill="#4c4ca6" />
      <path d="M434 204l165-74v2.500L434 207z" fill="#7c7cc4" />
      <Column x={927} y={173} />
      <Column x={399} y={210} />
      <path d="M745 252L932 169v13L753 266z" fill="#9292ff" />
      <path d="M744 252L931 168l2 6L750 257z" fill="#4c4ca6" />
      <path d="M753 263L933 180v2.500L753 266z" fill="#7c7cc4" />
      <path d="M599 118l7-3 336 50v14l-8 3-335-49z" fill="#7a7af6" />
      <path d="M599 118l7-3 336 50-8 4z" fill="#4c4ca6" />
      <path d="M599 131.500l4-1.500 331 50v2z" fill="#4c4ca6" />
      <path d="M599 118l7-3 336 50v14l-8 3-335-49zM599 118l335 51 8-4M934 169v13M606 115v14M606 129l336 50M599 132l7-3" stroke="#f01020" />
      <path d="M420 221L509 311" stroke="#4646b8" strokeWidth="1.400" />
      <path d="M754 270L872 388" stroke="#4646b8" strokeWidth="1.400" />
      <Column x={734} y={266} />
      <path d="M405 204l9-3 334 50v15l-8 3-335-50z" fill="#7a7af6" />
      <path d="M405 204l9-3 334 50-8 4z" fill="#4c4ca6" />
      <path d="M405 218l5-1.500 330 50v2.500z" fill="#4c4ca6" />
      <path d="M405 204l9-3 334 50v15l-8 3-335-50zM405 204l335 51 8-4M740 255v14M414 201v14M414 215l334 51M405 219l9-4" stroke="#f01020" />
      <Hinge x={606} y={124} left />
      <Hinge x={933} y={173} />
      <Hinge x={413} y={211} left />
      <Hinge x={740} y={260} />
      <path d="M716 575l20-13v8z" fill="#7be07b" />
      <path d="M716 575l20-5v12z" fill="#35bb35" />
    </svg>
  );
}

/* ---------- dialog parts ---------- */

function Group({ title, className, bodyClass, children }) {
  return (
    <section className={"flex flex-col " + (className || "")}>
      <h3 className="h-[17px] pl-[2px] bg-[#dce6f4] text-[#1d4a72] [clip-path:polygon(0_0,calc(100%-10px)_0,100%_10px,100%_100%,0_100%)]">
        {title}
      </h3>
      <div className={"flex-1 border-b border-r border-[#a6a6ea] bg-[#f0f4fa] " + (bodyClass || "")}>{children}</div>
    </section>
  );
}

const Blank = ({ className, children }) => (
  <div className={"bg-[#f0f4fa] border border-t-[#dce6f4] border-l-[#dce6f4] border-[#a6a6ea] " + className}>{children}</div>
);

const OFF = "text-[#a0a0a0] [text-shadow:1px_1px_0_#fff]";

function Radio({ name, label, checked, disabled, className }) {
  return (
    <label className={"flex items-center gap-[2px] " + (className || "") + (disabled ? " text-[#8a8a8a]" : " text-black")}>
      <input
        type="radio"
        name={name}
        defaultChecked={checked}
        disabled={disabled}
        className="appearance-none w-[13px] h-[13px] rounded-full border border-[#333] bg-white checked:bg-[#333] checked:shadow-[inset_0_0_0_2px_#fff] disabled:border-[#bcbcbc] disabled:checked:bg-[#c4c4c4]"
      />
      {label}
    </label>
  );
}

function Check({ label, checked }) {
  return (
    <label className="flex items-start gap-[2px] text-black">
      <span className="relative w-[13px] h-[13px] shrink-0 flex">
        <input type="checkbox" defaultChecked={checked} className="appearance-none w-[13px] h-[13px] border border-[#333] bg-white" />
        {checked && (
          <svg className="absolute inset-0 pointer-events-none" viewBox="0 0 13 13" fill="none" stroke="#333" strokeWidth="1.300">
            <path d="M3 6.500l2.500 3L10.500 3.500" />
          </svg>
        )}
      </span>
      {label}
    </label>
  );
}

function Select({ value, disabled, className, label, white }) {
  return (
    <span className={"relative flex h-[21px] " + className}>
      <select
        aria-label={label}
        disabled={disabled}
        className={
          "appearance-none w-full h-full pl-[3px] border opacity-100 " +
          (white
            ? "bg-white border-[#7a7a7a]"
            : disabled
              ? "bg-[#cccccc] border-[#bfbfbf] text-[#838383]"
              : "bg-[#e1e1e1] border-[#adadad] text-black")
        }
      >
        <option>{value}</option>
      </select>
      <svg className="absolute right-[4px] top-2 w-[9px] h-[5px] pointer-events-none" viewBox="0 0 9 5" fill="none" stroke={disabled ? "#a4a4a4" : "#444"}>
        <path d="M.5 .5l4 4 4-4" />
      </svg>
    </span>
  );
}

function Arrows({ disabled, side }) {
  const c = disabled ? "#666" : "#000";
  const btn = "flex items-center justify-center border " + (disabled ? "bg-[#f0f0f0] border-[#dadada]" : "bg-[#e8e8e8] border-[#b4b4b4]");
  return (
    <>
      <span className="flex flex-col w-3">
        <button aria-label="Více" disabled={disabled} className={"flex-1 " + btn}>
          <svg className="w-[5px] h-[3px]" viewBox="0 0 5 3"><path d="M0 3h5L2.500 0z" fill={c} /></svg>
        </button>
        <button aria-label="Méně" disabled={disabled} className={"flex-1 " + btn}>
          <svg className="w-[5px] h-[3px]" viewBox="0 0 5 3"><path d="M0 0h5L2.500 3z" fill={c} /></svg>
        </button>
      </span>
      {side && (
        <button aria-label="Vybrat" disabled={disabled} className={"w-[9px] ml-px " + btn}>
          <svg className="w-[3px] h-[5px]" viewBox="0 0 3 5"><path d="M0 0v5L3 2.500z" fill={c} /></svg>
        </button>
      )}
    </>
  );
}

function Spin({ value, disabled, className, label }) {
  return (
    <span className={"flex h-5 p-px border border-[#7f9db9] bg-white " + className}>
      <input
        aria-label={label}
        disabled={disabled}
        defaultValue={value}
        className={"flex-1 min-w-0 text-right pr-[5px] text-black " + (disabled ? "bg-[#f0f0f0]" : "bg-white")}
      />
      <Arrows disabled={disabled} side />
    </span>
  );
}

const IconButton = ({ name, off }) => (
  <button
    aria-label={name}
    className={"w-[25px] h-[21px] shrink-0 flex items-center justify-center border " + (off ? "bg-[#cccccc] border-[#bfbfbf]" : "bg-[#e1e1e1] border-[#adadad]")}
  >
    <Icon name={name} />
  </button>
);

const TextButton = ({ children, primary }) => (
  <button className={"w-[73px] h-[21px] flex items-center justify-center bg-[#e1e1e1] text-black " + (primary ? "border-2 border-[#0078d7]" : "border border-[#adadad]")}>
    {children}
  </button>
);

const CloseX = ({ color }) => (
  <button aria-label="Zavřít">
    <svg className="w-[11px] h-[11px]" viewBox="0 0 11 11" stroke={color}><path d="M.5 .5l10 10M10.500 .5l-10 10" /></svg>
  </button>
);

const RELEASES = [
  { s: "u", i: "x", unit: "[kN/m]", kind: "Není" },
  { s: "u", i: "y", unit: "[kN/m]", kind: "Není" },
  { s: "u", i: "z", unit: "[kN/m]", kind: "Není" },
  { s: "φ", i: "x", unit: "[kNm/rad]", kind: "Není" },
  { s: "φ", i: "y", unit: "[kNm/rad]", kind: "Diagram...", checked: true },
  { s: "φ", i: "z", unit: "[kNm/rad]", kind: "Není", checked: true, value: "0.000" },
];

const Sub = ({ children }) => <span className="relative top-[2px]">{children}</span>;

function ReleaseRow({ r }) {
  const off = !r.value;
  return (
    <div className="h-[25px] grid grid-cols-[93px_28px_8px_92px_155px_1fr_33px] items-center">
      <Check
        checked={r.checked}
        label={<span className="ml-1 leading-[13px]">{r.s}<Sub>{r.i}</Sub></span>}
      />
      <span className={off ? "text-[#777]" : "text-black"}>C<Sub>{r.s}{r.i}</Sub></span>
      <span className={off ? OFF : "text-black"}>:</span>
      <Spin label={"C " + r.s + r.i} value={r.value} disabled={off} className="w-full" />
      <span className={"pl-1 " + (off ? OFF : "text-black")}>{r.unit}</span>
      <Select label={"Nelinearita " + r.s + r.i} value={r.kind} disabled={!r.checked} className="w-full" />
      <span className="pl-1 flex"><IconButton name={r.kind === "Diagram..." ? "edit" : "editOff"} off={r.kind !== "Diagram..."} /></span>
    </div>
  );
}

// hinge presets under the release table
const PRESETS = [
  ["N", "mr-[9px]"],
  ["Vy", "mr-[5px]"],
  ["Vz", "mr-[5px]"],
  ["Vy+Vz", "mr-[10px]"],
  ["My", "mr-[5px]"],
  ["Mz", "mr-[5px]"],
  ["My+z", "mr-[9px]"],
  ["–", ""],
];

function Preset({ label, className }) {
  const moment = label[0] === "M";
  return (
    <button aria-label={label} className={"w-[25px] h-[21px] border border-[#adadad] bg-[#e1e1e1] flex justify-center " + className}>
      <svg className="w-5 h-[19px] overflow-visible" viewBox="0 0 20 19" fill="none">
        <path d="M8 5.500h9" stroke="#555" strokeWidth="1.800" />
        {label === "N" && <path d="M3 3h8M3 8h8" stroke="#3f7d6a" strokeWidth="2" />}
        {label[0] === "V" && <path d="M4 2v7M7 2v7" stroke="#3f7d6a" strokeWidth="2" />}
        {moment && <circle cx="7" cy="5.500" r="2" stroke="#3f7d6a" strokeWidth="1.300" />}
        {(moment || label === "–") && <path d="M3.500 2v7M4 5.500h4" stroke="#555" strokeWidth="1.400" />}
        <text x="11" y="16.500" textAnchor="middle" fontSize={label.length > 2 ? 7 : 8} fontWeight="bold" fill="#3f7d6a">{label}</text>
      </svg>
    </button>
  );
}

const Arrow = ({ x1, y1, x2, y2, color, double }) => {
  const a = Math.atan2(y2 - y1, x2 - x1);
  const head = (x, y) => {
    const p = (t) => `${x - 9 * Math.cos(a + t)},${y - 9 * Math.sin(a + t)}`;
    return <polygon points={`${x},${y} ${p(0.38)} ${p(-0.38)}`} fill={color} />;
  };
  return (
    <>
      <line x1={x1} y1={y1} x2={x2 - 5 * Math.cos(a)} y2={y2 - 5 * Math.sin(a)} stroke={color} strokeWidth="1.400" />
      {head(x2, y2)}
      {double && head(x2 - 8 * Math.cos(a), y2 - 8 * Math.sin(a))}
    </>
  );
};

function BeamPicture() {
  return (
    <svg className="w-full h-full" viewBox="463 345 249 239" fontWeight="bold" fill="none">
      <Arrow x1={531} y1={369} x2={569} y2={374} color="#e3202c" />
      <Arrow x1={531} y1={369} x2={497} y2={383} color="#0a9a48" />
      <Arrow x1={531} y1={369} x2={531} y2={406} color="#352f86" />
      <circle cx="531" cy="369" r="2.500" fill="#b0488a" />
      <g fontSize="13" fontWeight="normal">
        <text x="570" y="380" fill="#e3202c">X</text>
        <text x="486" y="391" fill="#0a9a48">Y</text>
        <text x="527" y="419" fill="#352f86">Z</text>
      </g>
      <g stroke="#4a4764" strokeWidth="1">
        <path d="M552 516l60-20 45 16-62 16z" fill="#eceeee" />
        <path d="M552 516l43 12v7l-43-12z" fill="#fcebcc" />
        <path d="M595 528l62-16v7l-62 16z" fill="#eceeee" />
        <path d="M575 449v73l62-16v-26l-6-1 14-18-8 3v-22z" fill="#d6d8d8" />
        <path d="M571.500 448h4v74h-4z" fill="#fcebcc" />
        <path d="M552 437l62-16 43 12-62 16z" fill="#e8eaea" />
        <path d="M552 437l43 12v6l-43-12z" fill="#fcebcc" />
        <path d="M595 449l62-16v6l-62 16z" fill="#eceeee" />
        <path d="M554 479l34-8v15l-34 8z" fill="#d4d6e4" />
        <path d="M557 481l34-8v14l-34 8z" fill="#d4d6e4" />
        <path d="M560 482l36-9v14l-36 9z" fill="#e2e4ee" />
      </g>
      <Arrow x1={574} y1={486} x2={607} y2={478} color="#e3202c" />
      <Arrow x1={574} y1={486} x2={609} y2={496} color="#0a9a48" />
      <Arrow x1={574} y1={486} x2={574} y2={516} color="#352f86" />
      <circle cx="573.500" cy="486.500" r="3" fill="#b0488a" />
      <Arrow x1={612} y1={475} x2={638} y2={470} color="#546c94" />
      <Arrow x1={645} y1={467} x2={670} y2={461} color="#546c94" double />
      <Arrow x1={614} y1={497} x2={638} y2={504} color="#546c94" />
      <Arrow x1={643} y1={505} x2={668} y2={512} color="#546c94" double />
      <Arrow x1={574} y1={519} x2={574} y2={545} color="#546c94" />
      <Arrow x1={574} y1={549} x2={574} y2={575} color="#546c94" double />
      <g fontSize="12">
        <text x="602" y="474" fill="#e3202c">x</text>
        <text x="609" y="491" fill="#0a9a48">y</text>
        <text x="579" y="518" fill="#352f86">z</text>
      </g>
      <g fontSize="9" fill="#4c506c">
        <text x="627" y="467">N</text>
        <text x="660" y="457">M<tspan dy="2" fontSize="8">T</tspan></text>
        <text x="622" y="494">V<tspan dy="3" fontSize="8">y</tspan></text>
        <text x="661" y="504">M<tspan dy="3" fontSize="8">y</tspan></text>
        <text x="580" y="546">V<tspan dy="2" fontSize="8">z</tspan></text>
        <text x="580" y="573">M<tspan dy="2" fontSize="8">z</tspan></text>
      </g>
    </svg>
  );
}

function HingeDialog() {
  return (
    <div role="dialog" aria-label="Upravit kloub na konci prutu" className="absolute left-[75px] top-[310px] w-[646px] bg-[#f0f0f0] border border-[#a3a3a3] shadow-[0_3px_14px_rgba(0,0,0,0.45)]">
      <header className="h-[25px] bg-white flex items-center justify-between pl-[2px] pr-[10px] pb-px text-[#999]">
        Upravit kloub na konci prutu
        <CloseX color="#888" />
      </header>
      <div className="px-[7px] pt-2 pb-[8px] flex flex-col">
        <div className="flex gap-[7px]">
          <div className="w-[372px] flex flex-col gap-[10px]">
            <div className="flex gap-2">
              <Group title="Kloub na konci prutu č." className="w-[202px] h-[45px]" bodyClass="pl-[3px] pt-[3px]">
                <input aria-label="Kloub na konci prutu č." disabled defaultValue="1" className="block w-[45px] h-5 border border-[#ccc] bg-[#f0f0f0] text-right pr-[6px] text-[#777]" />
              </Group>
              <Blank className="flex-1" />
            </div>
            <Group title="Vztažný systém" className="h-[185px]" bodyClass="pl-[3px] pt-[3px]">
              <Radio name="sys" label="Lokální osy prutu x,y,z" checked className="h-[21px]" />
              <Radio name="sys" label="Globální osy X,Y,Z" className="h-[21px]" />
              <Radio name="sys" label="Globální natočené osy X',Y',Z'" className="h-[21px]" />
              <div className="flex mt-[3px]">
                <div className="ml-4 w-[76px]">
                  <div className={"h-[22px] leading-[22px] " + OFF}>Pořadí:</div>
                  <Select label="Pořadí" value="XYZ" disabled className="w-[54px]" />
                </div>
                <div>
                  <div className={"h-[22px] leading-[22px] " + OFF}>Natočení okolo</div>
                  <div className="flex flex-col gap-[2px]">
                    {["X'", "Y'", "Z'"].map((a) => (
                      <div key={a} className={"flex items-center " + OFF}>
                        <span className="w-[22px]">{a}:</span>
                        <Spin label={"Natočení okolo " + a} disabled className="w-[83px]" />
                        <span className="pl-1">[°]</span>
                      </div>
                    ))}
                  </div>
                </div>
              </div>
            </Group>
          </div>
          <div className="flex-1 h-[241px] border border-t-[#999] border-l-[#999] border-white bg-[linear-gradient(30deg,#ffffff_20%,#fdf4da_80%)]">
            <BeamPicture />
          </div>
        </div>
        <Group title="Podmínky uvolnění" className="mt-[9px] h-[217px]" bodyClass="pl-[3px] pt-[3px]">
          <div className="h-[18px] grid grid-cols-[93px_283px_1fr] items-center text-black">
            <span>Kloub</span>
            <span>Tuhost</span>
            <span>Nelinearita</span>
          </div>
          {RELEASES.slice(0, 3).map((r) => <ReleaseRow key={r.s + r.i} r={r} />)}
          <div className="mt-[6px] h-[18px] leading-[18px] text-black">Kloub</div>
          {RELEASES.slice(3).map((r) => <ReleaseRow key={r.s + r.i} r={r} />)}
        </Group>
        <Blank className="mt-[2px] h-[30px] pl-[3px] pt-[4px] flex">
          {PRESETS.map(([l, c]) => <Preset key={l} label={l} className={c} />)}
        </Blank>
        <div className="mt-[10px] flex gap-[7px]">
          <Group title="Komentář" className="w-[372px] h-[45px]" bodyClass="px-[3px] pt-[2px] flex gap-[5px]">
            <Select label="Komentář" value="" white className="flex-1" />
            <IconButton name="cards" />
          </Group>
          <Blank className="flex-1" />
        </div>
        <div className="mt-[8px] h-[2px] border-t border-[#a0a0a0] bg-white" />
        <footer className="mt-[11px] flex items-center px-px">
          <IconButton name="help" />
          <span className="ml-[9px]"><IconButton name="units" /></span>
          <span className="ml-auto flex gap-[10px]">
            <TextButton>OK</TextButton>
            <TextButton>Storno</TextButton>
          </span>
        </footer>
      </div>
    </div>
  );
}

const POSITIVE = [
  ["0.0000", "0.000"],
  ["0.0010", "5.000"],
  ["0.0030", "10.000"],
  ["0.0050", "13.000"],
  ["0.0100", "17.500"],
  ["0.0175", "23.500"],
  ["0.0300", "30.000"],
  ["0.0500", "35.000"],
];

function Steps({ sign, active, focus }) {
  const neg = sign === "-";
  const cell = (v) => (neg && Number(v) ? "-" + v : v);
  return (
    <div className="flex-1 flex flex-col pt-px">
      <table className="w-full table-fixed border-collapse text-black">
        <colgroup>
          <col className="w-[45px]" />
          <col />
          <col />
        </colgroup>
        <thead>
          <tr className="h-[17px] bg-[#f0f0f0]">
            <th className="border border-[#909090] bg-[#e0e0e0]" />
            <th className="border border-[#909090] p-0 font-normal leading-[15px]">{sign}φ<Sub>y</Sub> [rad]</th>
            <th className="border border-[#909090] border-r-white p-0 font-normal leading-[15px]">M<Sub>y</Sub> [kNm]</th>
          </tr>
        </thead>
        <tbody>
          {POSITIVE.map((row, i) => {
            const gray = neg || i === active;
            return (
              <tr key={i} className={"h-4 " + (gray ? "bg-[#f0f0f0]" : "bg-white")}>
                <th className={"border border-[#808080] p-0 font-normal leading-[15px] " + (i === active ? "bg-[#0078d7] text-white" : "bg-[#e0e0e0]")}>{i + 1}</th>
                {row.map((v, k) => (
                  <td
                    key={k}
                    className={
                      "border border-[#a0a0a0] p-0 pr-1 text-right leading-[15px] " +
                      (i === active && k === focus ? "outline outline-dotted outline-black -outline-offset-1" : "")
                    }
                  >
                    {cell(v)}
                  </td>
                ))}
              </tr>
            );
          })}
        </tbody>
      </table>
      <div className="flex-1 grid grid-cols-[45px_1fr_1fr] bg-[#e7eeee]">
        <span className="bg-[#e0e0e0] border-x border-[#909090]" />
        <span className="border-r border-[#909090]" />
      </div>
    </div>
  );
}

const AFTER = ["Přetržení", "Tečení", "Průběžně", "Zastavení"];

function StepCount({ disabled }) {
  return (
    <div className="flex items-start">
      <span className={"w-[68px] whitespace-nowrap " + (disabled ? OFF : "")}>Počet kroků:</span>
      <span className={"mt-[10px] flex w-[48px] h-5 p-px border bg-white " + (disabled ? "border-[#ccc]" : "border-[#0078d7]")}>
        <input
          aria-label="Počet kroků"
          defaultValue="8"
          disabled={disabled}
          className={"flex-1 min-w-0 text-right pr-[6px] " + (disabled ? "bg-[#f0f0f0] text-[#777]" : "bg-white text-black")}
        />
        <Arrows disabled={disabled} />
      </span>
    </div>
  );
}

const CURVE = [[1145, 828], [1171, 828], [1212, 804], [1237, 773], [1252, 745], [1262, 723], [1267, 709], [1270, 685], [1275, 638], [1279, 614], [1283, 600], [1293, 578], [1308, 550], [1333, 519], [1374, 495], [1400, 495]];

function Diagram() {
  return (
    <svg className="w-full h-full" viewBox="1101 437 343 452" fill="none">
      <path d="M1272.500 466V856M1124 661.500H1421" stroke="#a8a8a8" />
      <path d="M1272.500 461l3 8h-6zM1272.500 861l3-8h-6zM1120 661.500l9-3v6zM1425 661.500l-9-3v6z" fill="#a8a8a8" />
      <polyline points={CURVE.map((p) => p.join()).join(" ")} stroke="#000" strokeWidth="2" />
      {CURVE.slice(1, -1).map(([x, y]) => <rect key={x} x={x - 2} y={y - 2} width="4" height="4" fill="#f00" />)}
      <g fontSize="11" fill="#000">
        <text x="1277" y="457">+M<tspan dy="2">y</tspan></text>
        <text x="1277" y="873">-M<tspan dy="2">y</tspan></text>
        <text x="1111" y="675">-φ<tspan dy="2">y</tspan></text>
        <text x="1414" y="675">+φ<tspan dy="2">y</tspan></text>
      </g>
    </svg>
  );
}

function DiagramDialog() {
  return (
    <div role="dialog" aria-label="Nelinearita" className="absolute left-[730px] top-[385px] w-[724px] bg-[#f0f0f0] border border-[#5a5a5a] shadow-[0_4px_18px_rgba(0,0,0,0.5)]">
      <header className="h-[25px] bg-white flex items-center justify-between pl-[3px] pr-[10px] pb-px text-black">
        Nelinearita - diagram - kloub na konci prutu phi-y
        <CloseX color="#000" />
      </header>
      <div className="px-2 pt-2 pb-[8px] flex flex-col">
        <div className="flex gap-2">
          <div className="w-[353px] flex flex-col gap-[10px]">
            <Group title="Kladná oblast" className="h-[231px]" bodyClass="flex">
              <div className="w-[142px] pl-[2px] pt-[6px] leading-[13px] text-black">
                <StepCount />
                <p className="mt-[40px] mb-[3px]">Průběh po posledním kroku:</p>
                <div className="pl-px">
                  {AFTER.map((t) => <Radio key={t} name="pos" label={t} checked={t === "Tečení"} className="h-5" />)}
                </div>
              </div>
              <Steps sign="+" active={0} focus={1} />
            </Group>
            <Group title="Záporná oblast" className="h-[230px]" bodyClass="flex">
              <div className="w-[142px] pl-[2px] pt-[6px] leading-[13px] text-black">
                <div className="pl-px">
                  <Check checked label={<span className="w-24">Symetricky okolo počátku</span>} />
                </div>
                <div className="mt-[6px]"><StepCount disabled /></div>
                <p className={"mt-[12px] mb-[4px] " + OFF}>Průběh po posledním kroku:</p>
                <div className="pl-px">
                  {AFTER.map((t) => <Radio key={t} name="neg" label={t} checked={t === "Tečení"} disabled className="h-5" />)}
                </div>
              </div>
              <Steps sign="-" active={1} focus={0} />
            </Group>
          </div>
          <Group title="Diagram" className="flex-1" bodyClass="border-t border-l border-t-[#a0a0a0] border-l-[#a0a0a0] bg-[linear-gradient(35deg,#ffffff_10%,#fdf8e4_90%)]">
            <Diagram />
          </Group>
        </div>
        <div className="mt-[9px] h-[2px] border-t border-[#a0a0a0] bg-white" />
        <footer className="mt-[10px] flex items-center px-px">
          <IconButton name="help" />
          <span className="ml-[9px] mr-[10px]"><IconButton name="units" /></span>
          <span className="flex gap-[5px] mr-[9px]">
            <IconButton name="folderArc" />
            <IconButton name="saveWin" />
          </span>
          <span className="flex gap-[5px] mr-[10px]">
            <IconButton name="excelUp" />
            <IconButton name="excelDown" />
          </span>
          <IconButton name="calc" />
          <span className="ml-auto flex gap-[9px]">
            <TextButton primary>OK</TextButton>
            <TextButton>Storno</TextButton>
          </span>
        </footer>
      </div>
    </div>
  );
}

/* ---------- window ---------- */

const MODES = [
  ["UCHOP", "w-[44px]"],
  ["RASTR", "w-[41px]"],
  ["ORTO", "w-[48px]"],
  ["OUCHOP", "w-[54px]"],
  ["VLINIE", "w-[39px]"],
  ["DXF", "w-[26px]"],
];

export default function App() {
  return (
    <div className="relative h-screen overflow-hidden flex flex-col bg-[#cfd3dc] font-['Open_Sans',sans-serif] text-[11px] leading-4 text-[#333]">
      <header className="h-[29px] bg-white flex items-center pl-[7px] pb-[2px] text-[#8f8f8f]">
        <svg className="w-4 h-4 mr-1" viewBox="0 0 16 16" fill="none">
          <path d="M1 1h8v4H1zM2 5v9M6 5v9" fill="#b9dff4" stroke="#5aa6d6" strokeWidth="1.400" />
          <path d="M0 14.500h5" stroke="#2c8a4a" strokeWidth="1.600" />
          <circle cx="11" cy="5" r="2.300" stroke="#a87c00" strokeWidth="3" />
          <circle cx="11" cy="11.500" r="2.800" stroke="#a87c00" strokeWidth="3" />
          <circle cx="11" cy="5" r="2.300" stroke="#f2c618" strokeWidth="1.800" />
          <circle cx="11" cy="11.500" r="2.800" stroke="#f2c618" strokeWidth="1.800" />
        </svg>
        <span className="flex-1">RSTAB 8.25.01 x64 - [RSTAB-File_KB000670*]</span>
        <span className="flex gap-9 pr-[18px]">
          <button aria-label="Minimalizovat"><svg className="w-[10px] h-[10px]" viewBox="0 0 10 10" stroke="#888"><path d="M0 5.500h10" /></svg></button>
          <button aria-label="Maximalizovat"><svg className="w-[10px] h-[10px]" viewBox="0 0 10 10" fill="none" stroke="#888"><path d="M.5 .5h9v9h-9z" /></svg></button>
          <button aria-label="Ukončit"><svg className="w-[10px] h-[10px]" viewBox="0 0 10 10" stroke="#888"><path d="M0 0l10 10M10 0L0 10" /></svg></button>
        </span>
      </header>

      <nav className="h-6 flex items-center text-[#3c3c44]">
        <span className="w-2 flex justify-center"><span className="h-3 border-l-2 border-dotted border-[#9a9fac]" /></span>
        <svg className="w-4 h-3 mr-[10px]" viewBox="0 0 16 12" fill="none">
          <path d="M0 0h16v12H0z" fill="#1c2a66" />
          <path d="M0 8l7-7 2 6 3-4 4 4M0 8.500h16M7 1v11M12 3v9" stroke="#fff" strokeWidth=".9" />
        </svg>
        <span className="flex gap-[15px]">
          {MENU.map(([a, u, b]) => (
            <button key={a + u + b} className="whitespace-nowrap">{a}<u>{u}</u>{b}</button>
          ))}
        </span>
        <span className="ml-auto flex gap-[7px] pr-[6px] pt-1">
          <svg className="w-2 h-2" viewBox="0 0 8 8" stroke="#666" strokeWidth="2"><path d="M0 7h7" /></svg>
          <svg className="w-[9px] h-2" viewBox="0 0 9 8" fill="none" stroke="#666"><path d="M2.500 2V.5h6v4H7M.5 3h6v4h-6zM.5 4h6" /></svg>
          <svg className="w-[9px] h-2" viewBox="0 0 9 8" stroke="#666" strokeWidth="2"><path d="M1 0l7 8M8 0L1 8" /></svg>
        </span>
      </nav>

      <Toolbar groups={ROW1} />
      <Toolbar groups={ROW2} />

      <main className="flex-1 min-h-0 flex">
        <Navigator />
        <div className="flex-1 min-w-0 ml-1 mr-px border-l-2 border-t-2 border-[#6c6c70] bg-white overflow-hidden">
          <Model />
        </div>
      </main>

      <footer className="h-5 flex items-end pl-[2px] border-t border-[#9a9ea8] bg-linear-to-b from-[#d5d8e0] via-[#a9aeb9] to-[#c0c4cd] text-[#222]">
        <span className="flex-1">Hotovo</span>
        <span className="w-[786px] shrink-0 flex h-[18px] gap-[3px]">
          {MODES.map(([m, w], i) => (
            <button key={m} className={"overflow-hidden text-center border " + w + (i === 1 ? " border-[#e4e6ea]" : " border-t-[#111] border-l-[#111] border-[#e4e6ea]")}>{m}</button>
          ))}
          <span className="w-[187px] border-l border-[#888c96]" />
          <span className="w-[85px] border-l border-[#888c96]" />
          <span className="w-[71px] border-l border-[#888c96]" />
          <span className="w-[71px] border-l border-[#888c96]" />
          <span className="flex-1 border-l border-[#888c96]" />
        </span>
      </footer>

      <HingeDialog />
      <DiagramDialog />

      {/* callouts */}
      <div className="absolute left-[36px] top-[215px] w-[193px] h-[44px] border-[5px] border-[#ed1c24] pointer-events-none" />
      <div className="absolute left-[676px] top-[756px] w-[38px] h-[34px] border-[5px] border-[#ed1c24] pointer-events-none" />
      <div className="absolute left-[799px] top-[902px] w-[76px] h-[38px] border-[5px] border-[#ed1c24] pointer-events-none" />
      <svg className="absolute left-[710px] top-[738px] w-[50px] h-[36px] pointer-events-none" viewBox="0 0 50 36" fill="none" stroke="#ed1c24" strokeWidth="5" strokeLinecap="round">
        <path d="M4 31L41 9M29 8l13-1-5 13" />
      </svg>
    </div>
  );
}
